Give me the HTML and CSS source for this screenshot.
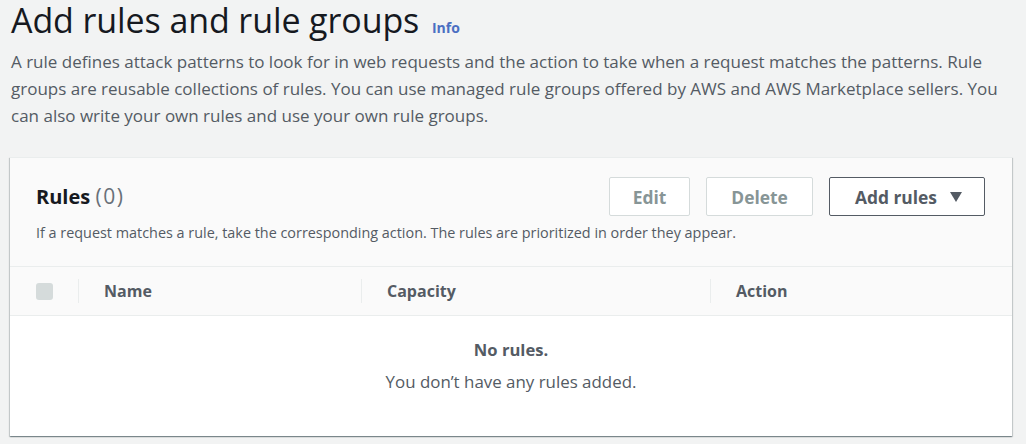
FILE: index.html
```html
<!DOCTYPE html>
<html lang="en">
<head>
<meta charset="utf-8">
<title>Add rules and rule groups</title>
<link rel="stylesheet" href="styles.css">
</head>
<body>
<main class="page">
  <header class="page-head">
    <h1 class="page-title">Add rules and rule groups <a class="info-link" href="#">Info</a></h1>
    <p class="page-desc">A rule defines attack patterns to look for in web requests and the action to take when a request matches the patterns. Rule groups are reusable collections of rules. You can use managed rule groups offered by AWS and AWS Marketplace sellers. You can also write your own rules and use your own rule groups.</p>
  </header>

  <section class="card">
    <div class="card-head">
      <div class="card-head-row">
        <h2 class="card-title">Rules <span class="count">(0)</span></h2>
        <div class="actions">
          <button class="btn btn-disabled" type="button">Edit</button>
          <button class="btn btn-disabled" type="button">Delete</button>
          <button class="btn btn-primary" type="button">Add rules <span class="caret"></span></button>
        </div>
      </div>
      <p class="card-desc">If a request matches a rule, take the corresponding action. The rules are prioritized in order they appear.</p>
    </div>

    <div class="table-head">
      <div class="cell cell-check"><span class="checkbox"></span></div>
      <div class="cell">Name</div>
      <div class="cell">Capacity</div>
      <div class="cell">Action</div>
    </div>

    <div class="empty">
      <p class="empty-title">No rules.</p>
      <p class="empty-text">You don’t have any rules added.</p>
    </div>
  </section>
</main>
</body>
</html>
```

FILE: styles.css
```css
* { box-sizing: border-box; }

html, body {
  margin: 0;
  padding: 0;
  background: #f2f3f3;
}

body {
  font-family: "Open Sans", "Noto Sans", "Liberation Sans", sans-serif;
  color: #16191f;
  width: 1026px;
  height: 444px;
  overflow: hidden;
}

.page {
  padding: 0 14px 0 10px;
}

.page-head {
  padding-left: 1px;
}

.page-title {
  margin: 0;
  font-size: 34px;
  font-weight: 400;
  line-height: 40px;
  color: #16191f;
  letter-spacing: -0.1px;
}

.info-link {
  font-size: 14px;
  font-weight: 700;
  line-height: 1;
  color: #4b6fc2;
  text-decoration: none;
  margin-left: 4px;
  letter-spacing: 0;
}

.page-desc {
  margin: 8px 0 0;
  font-size: 17px;
  line-height: 27px;
  color: #545b64;
}

.card {
  margin-top: 28px;
  background: #fff;
  border-top: 1px solid #eaeded;
  box-shadow: 0 1px 1px 0 rgba(0, 28, 36, 0.3), 1px 1px 1px 0 rgba(0, 28, 36, 0.15), -1px 1px 1px 0 rgba(0, 28, 36, 0.15);
}

.card-head {
  background: #fafafa;
  padding: 19px 26px 24px 26px;
  border-bottom: 1px solid #eaeded;
}

.card-head-row {
  display: flex;
  align-items: center;
  justify-content: space-between;
}

.card-title {
  margin: 0;
  font-size: 20px;
  font-weight: 700;
  line-height: 28px;
  color: #16191f;
}

.count {
  font-weight: 400;
  font-size: 21px;
  letter-spacing: 1.6px;
  color: #687078;
}

.actions {
  display: flex;
  gap: 16px;
  padding-right: 1px;
}

.btn {
  font-family: inherit;
  font-size: 17.4px;
  font-weight: 700;
  height: 39px;
  padding: 0 24px;
  border-radius: 2px;
  background: #fff;
  display: inline-flex;
  align-items: center;
  gap: 13px;
}

.btn-disabled {
  border: 1px solid #d5dbdb;
  color: #879596;
}

.btn-disabled:first-child {
  padding: 0 23px;
}

.btn-primary {
  border: 1px solid #545b64;
  color: #545b64;
  padding: 0 22px 0 25px;
}

.caret {
  width: 0;
  height: 0;
  border-left: 6.5px solid transparent;
  border-right: 6.5px solid transparent;
  border-top: 10px solid #545b64;
}

.card-desc {
  margin: 8px 0 0;
  font-size: 14.4px;
  line-height: 18px;
  color: #545b64;
}

.table-head {
  display: grid;
  grid-template-columns: 68px 283px 349px 1fr;
  background: #fafafa;
  border-bottom: 1px solid #eaeded;
  height: 49px;
  align-items: center;
}

.cell {
  font-size: 16px;
  font-weight: 700;
  color: #545b64;
  padding-left: 25px;
  border-left: 1px solid #eaeded;
  line-height: 24px;
}

.cell-check {
  border-left: 0;
  padding-left: 26px;
  display: flex;
  align-items: center;
}

.checkbox {
  display: block;
  width: 17px;
  height: 17px;
  border-radius: 3px;
  background: #d5dbdb;
}

.empty {
  text-align: center;
  padding: 22px 0 42px;
  color: #545b64;
}

.empty-title {
  margin: 0;
  font-size: 16.6px;
  font-weight: 700;
  line-height: 24px;
}

.empty-text {
  margin: 8px 0 0;
  font-size: 16.9px;
  line-height: 24px;
}
```
